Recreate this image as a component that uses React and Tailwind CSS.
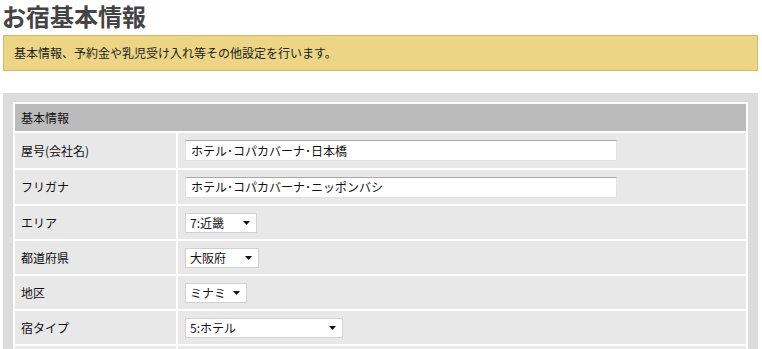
import React from "react";

const font = { fontFamily: '"Noto Sans CJK JP", "Noto Sans", sans-serif' };

function Arrow() {
  return (
    <svg width="7" height="4" viewBox="0 0 7 4" className="shrink-0">
      <path d="M0 0 L7 0 L3.5 4 Z" fill="#111" />
    </svg>
  );
}

function FakeSelect({ value, width }) {
  return (
    <div
      className="flex h-[20px] items-center justify-between border border-[#d0d0d0] bg-white pl-[4px] pr-[6px] text-[12px] leading-none text-[#111]"
      style={{ width }}
    >
      <span>{value}</span>
      <Arrow />
    </div>
  );
}

function TextInput({ value }) {
  return (
    <div className="flex h-[21px] w-[432px] items-center border border-[#e2e2e2] border-t-[#a8a8a8] bg-white pl-[5px] text-[12px] leading-none text-[#111]">
      {value}
    </div>
  );
}

export default function App() {
  const rows = [
    { label: "屋号(会社名)", h: "h-[35px]", el: <TextInput value="ホテル･コパカバーナ･日本橋" /> },
    { label: "フリガナ", h: "h-[34px]", el: <TextInput value="ホテル･コパカバーナ･ニッポンバシ" /> },
    { label: "エリア", h: "h-[33px]", el: <FakeSelect value="7:近畿" width={72} /> },
    { label: "都道府県", h: "h-[33px]", el: <FakeSelect value="大阪府" width={74} /> },
    { label: "地区", h: "h-[33px]", el: <FakeSelect value="ミナミ" width={62} /> },
    { label: "宿タイプ", h: "h-[33px]", el: <FakeSelect value="5:ホテル" width={158} /> },
    { label: "", h: "h-[33px]", el: null },
  ];

  return (
    <div className="h-[349px] w-[762px] overflow-hidden bg-white" style={font}>
      <h1 className="h-[35px] pl-[2px] pt-[3px] text-[24px] font-bold leading-[25px] text-[#444]">
        お宿基本情報
      </h1>
      <div className="ml-[3px] flex h-[36px] w-[755px] items-center border border-[#d6b866] bg-[#ecd585] pl-[10px] text-[12px] text-[#222]">
        基本情報、予約金や乳児受け入れ等その他設定を行います。
      </div>
      <div className="ml-[3px] mt-[22px] w-[755px] bg-[#dcdcdc] px-[10px] pt-[9px] pb-[10px]">
        <div className="grid grid-cols-[161px_1fr] gap-[2px] bg-white p-[2px]">
          <div className="col-span-2 flex h-[27px] items-center bg-[#bbbbbb] pl-[6px] text-[12px] text-[#111]">
            基本情報
          </div>
          {rows.map((r, i) => (
            <React.Fragment key={i}>
              <div className={`flex ${r.h} items-center bg-[#e8e8e8] pl-[6px] text-[12px] text-[#111]`}>
                {r.label}
              </div>
              <div className={`flex ${r.h} items-center bg-[#e8e8e8] pl-[7px]`}>{r.el}</div>
            </React.Fragment>
          ))}
        </div>
      </div>
    </div>
  );
}
